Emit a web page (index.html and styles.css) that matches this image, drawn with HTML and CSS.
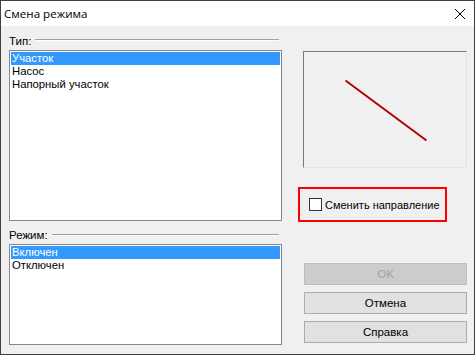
FILE: index.html
```html
<!DOCTYPE html>
<html lang="ru">
<head>
  <meta charset="UTF-8">
  <title>Смена режима</title>
  <link rel="stylesheet" href="styles.css">
</head>
<body>
  <div class="window">
    <div class="titlebar">
      <span class="title">Смена режима</span>
      <svg class="close" width="12" height="12" viewBox="0 0 12 12">
        <path d="M1 1 L11 11 M11 1 L1 11" stroke="#000" stroke-width="1" fill="none"/>
      </svg>
    </div>
    <div class="content">
      <div class="left">
        <div class="group-head">
          <span class="group-label">Тип:</span>
          <span class="rule"></span>
        </div>
        <ul class="listbox type-list">
          <li class="selected">Участок</li>
          <li>Насос</li>
          <li>Напорный участок</li>
        </ul>
        <div class="group-head mode-head">
          <span class="group-label">Режим:</span>
          <span class="rule"></span>
        </div>
        <ul class="listbox mode-list">
          <li class="selected">Включен</li>
          <li>Отключен</li>
        </ul>
      </div>
      <div class="right">
        <div class="preview">
          <svg width="162" height="115" viewBox="0 0 162 115">
            <line x1="41.5" y1="28.5" x2="122.5" y2="88.5" stroke="#b40000" stroke-width="2"/>
          </svg>
        </div>
        <label class="direction">
          <span class="checkbox"></span>
          <span>Сменить направление</span>
        </label>
        <div class="buttons">
          <button class="btn" disabled>OK</button>
          <button class="btn">Отмена</button>
          <button class="btn">Справка</button>
        </div>
      </div>
    </div>
  </div>
</body>
</html>
```
FILE: styles.css
```css
body {
  margin: 0;
  padding: 0;
  background: #fff;
  font-family: "Liberation Sans", Arial, sans-serif;
  font-size: 11px;
  color: #000;
}

.window {
  width: 475px;
  height: 355px;
  box-sizing: border-box;
  border: 1px solid #3f3f3f;
  background: #f0f0f0;
  display: flex;
  flex-direction: column;
}

.titlebar {
  height: 25px;
  background: #fff;
  display: flex;
  align-items: center;
  justify-content: space-between;
  padding: 0 8px 0 3px;
}

.title {
  font-family: "Open Sans", "Noto Sans", sans-serif;
  font-size: 11.6px;
  line-height: 16px;
  margin-top: 1px;
}

.close {
  margin-top: 1px;
}

.content {
  display: flex;
  padding: 7px 7px 0 8px;
}

.left {
  width: 273px;
  display: flex;
  flex-direction: column;
}

.group-head {
  display: flex;
  align-items: flex-start;
  height: 17px;
}

.group-label {
  line-height: 16px;
  font-size: 11.5px;
}

.rule {
  flex: 1;
  margin: 6px 3px 0 4px;
  border-top: 1px solid #a0a0a0;
  border-bottom: 1px solid #fff;
}

.mode-head {
  margin-top: 6px;
  height: 17px;
}

.mode-head .rule {
  margin-top: 7px;
}

.listbox {
  list-style: none;
  margin: 0;
  padding: 1px;
  background: #fff;
  border: 1px solid #828790;
  box-sizing: border-box;
  font-size: 11.3px;
}

.listbox li {
  height: 13px;
  line-height: 13px;
  padding-left: 1px;
  white-space: nowrap;
}

.listbox li.selected {
  background: #3399ff;
  color: #fff;
}

.type-list {
  height: 171px;
}

.mode-list {
  height: 101px;
}

.right {
  width: 164px;
  margin-left: 21px;
  display: flex;
  flex-direction: column;
}

.preview {
  margin-top: 18px;
  height: 117px;
  box-sizing: border-box;
  border: 1px solid;
  border-color: #7a7a7a #e3e3e3 #e3e3e3 #7a7a7a;
  background: #f0f0f0;
}

.preview svg {
  display: block;
}

.direction {
  margin: 19px 0 0 -5px;
  width: 149px;
  height: 35px;
  box-sizing: border-box;
  border: 2px solid #ff0000;
  display: flex;
  align-items: center;
  padding-left: 9px;
  white-space: nowrap;
  font-size: 11px;
}

.checkbox {
  width: 13px;
  height: 13px;
  box-sizing: border-box;
  border: 1px solid #333;
  background: #fff;
  margin-right: 3px;
  flex-shrink: 0;
}

.buttons {
  margin: 41px 0 0 1px;
  display: flex;
  flex-direction: column;
  gap: 7px;
}

.btn {
  width: 163px;
  height: 22px;
  box-sizing: border-box;
  border: 1px solid #adadad;
  background: #e1e1e1;
  font-family: "Liberation Sans", Arial, sans-serif;
  font-size: 11.5px;
  color: #000;
  padding: 0;
}

.btn:disabled {
  background: #cccccc;
  border-color: #bfbfbf;
  color: #a0a0a0;
}
```
